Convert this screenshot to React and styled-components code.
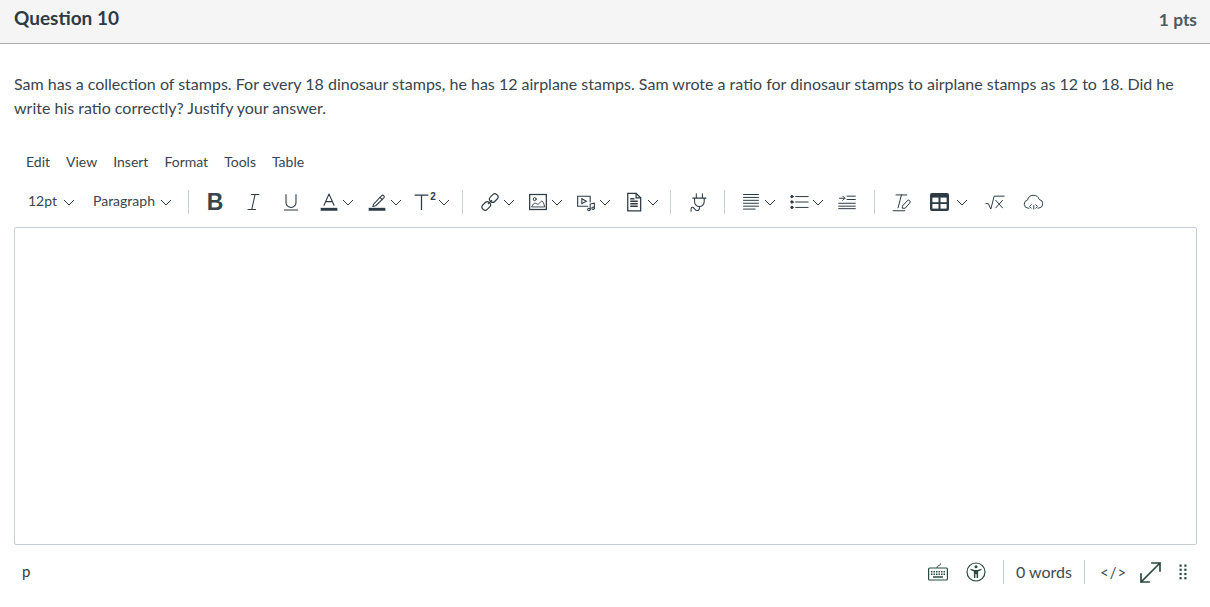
import React from 'react';
import styled, { createGlobalStyle } from 'styled-components';

const INK = '#2d3b45';
const GREEN = '#2b4a3e';

const GlobalStyle = createGlobalStyle`
    html, body {
        margin: 0;
        padding: 0;
        background: #fff;
        overflow: hidden;
    }
    body {
        font-family: Lato, "Liberation Sans", sans-serif;
        color: ${INK};
    }
`;

const Page = styled.div`
    width: 1210px;
    height: 607px;
`;

const QuestionHeader = styled.header`
    display: flex;
    align-items: center;
    justify-content: space-between;
    box-sizing: border-box;
    height: 44px;
    padding: 0 13px 7px 14px;
    background: #f5f5f5;
    border-bottom: 1px solid #a9adb0;
`;

const QuestionTitle = styled.h2`
    margin: 0;
    font-size: 19px;
    line-height: 24px;
    font-weight: 700;
`;

const Points = styled.span`
    font-size: 17.4px;
    line-height: 24px;
    font-weight: 700;
    color: #4d5a63;
    padding-top: 4px;
`;

const QuestionText = styled.p`
    margin: 28px 13px 0 14px;
    font-size: 16px;
    line-height: 24px;
    color: #38454e;
`;

const MenuBar = styled.nav`
    display: flex;
    align-items: center;
    height: 30px;
    margin-top: 27px;
    padding-left: 18px;
`;

const MenuItem = styled.span`
    padding: 0 8px;
    font-size: 14px;
    line-height: 20px;
    color: #38454e;
`;

const Toolbar = styled.div`
    display: flex;
    align-items: center;
    height: 38px;
    margin-top: 6px;
    padding-left: 14px;
`;

const SelectButton = styled.div`
    display: flex;
    align-items: center;
    gap: 5.5px;
    width: ${(p) => p.$width}px;
    padding-left: 14px;
    box-sizing: border-box;
    font-size: 14px;
    flex: none;
    color: #38454e;
`;

const SelectLabel = styled.span`
    padding-bottom: 4px;
`;

const Divider = styled.span`
    flex: none;
    width: 1px;
    height: ${(p) => p.$height || 24}px;
    margin: 0 ${(p) => p.$right ?? 8}px 0 ${(p) => p.$left ?? 8}px;
    background: #c7cdd1;
`;

const IconButton = styled.div`
    flex: none;
    display: flex;
    align-items: center;
    justify-content: center;
    width: 38px;
    height: 38px;
`;

const SplitButton = styled.div`
    flex: none;
    display: flex;
    align-items: center;
    height: 38px;
    width: ${(p) => p.$width || 48}px;
    padding-left: 3px;
    box-sizing: border-box;
`;

const SplitIcon = styled.span`
    flex: none;
    display: flex;
    align-items: center;
    justify-content: center;
    width: 32px;
`;

const SplitArrow = styled.span`
    flex: none;
    display: flex;
    justify-content: center;
    width: 12px;
    margin-left: ${(p) => p.$offset ?? -3}px;
`;

const BoldGlyph = styled.span`
    font-family: "Liberation Sans", sans-serif;
    font-weight: 700;
    font-size: 23px;
    line-height: 24px;
    color: #38454e;
`;

const Superscript = styled.span`
    display: flex;
    align-items: flex-start;
    height: 22px;

    sup {
        font-family: "Liberation Sans", sans-serif;
        font-size: 10px;
        line-height: 11px;
        font-weight: 700;
        vertical-align: baseline;
        margin-left: 1px;
    }
`;

const Editor = styled.div`
    box-sizing: border-box;
    height: 318px;
    margin: 6px 13px 0 14px;
    border: 1px solid #c7cdd1;
    border-radius: 2px;
`;

const StatusBar = styled.footer`
    display: flex;
    align-items: center;
    height: 40px;
    margin: 7px 13px 0 14px;
    font-size: 16px;
`;

const ElementPath = styled.span`
    padding: 0 0 2px 8px;
    font-size: 15px;
    flex: 1;
`;

const StatusIcon = styled.span`
    flex: none;
    display: flex;
    align-items: center;
    justify-content: center;
    width: ${(p) => p.$width}px;
    margin-left: ${(p) => p.$gap || 0}px;
`;

const WordCount = styled.span`
    flex: none;
    padding-bottom: 2px;
    font-size: 16px;
    color: #3d4a52;
`;

const SourceToggle = styled.span`
    flex: none;
    width: 24px;
    margin: 0 15px;
    font-size: 15px;
    letter-spacing: 1px;
    white-space: nowrap;
    color: #3d4a52;
`;

const Icon = ({ size = 20, w, h, box = '0 0 24 24', children, stroke = INK, sw = 1.3, join = 'round' }) => (
    <svg
        width={w || size}
        height={h || size}
        viewBox={box}
        fill="none"
        stroke={stroke}
        strokeWidth={sw}
        strokeLinecap="round"
        strokeLinejoin={join}
    >
        {children}
    </svg>
);

const Chevron = () => (
    <svg width="12" height="7" viewBox="0 0 12 7" fill="none" stroke={INK} strokeWidth="1">
        <path d="M1 1l5 5 5-5" />
    </svg>
);

const ItalicIcon = () => (
    <Icon size={20}>
        <path d="M10 3h9M6 21h9M14.5 3L10.5 21" />
    </Icon>
);

const UnderlineIcon = () => (
    <Icon size={20}>
        <path d="M6 3v9.5a6 6 0 0 0 12 0V3" />
        <path d="M4 21.5h16" />
    </Icon>
);

const TextColorIcon = () => (
    <Icon size={20}>
        <path d="M6 16L12 2.5 18 16M8 11.5h8" />
        <rect x="2" y="19" width="20" height="3.5" fill={INK} stroke="none" />
    </Icon>
);

const HighlightIcon = () => (
    <Icon size={20}>
        <path d="M8 14.5L17.5 4.5a1.8 1.8 0 0 1 2.7 2.5L10.5 16.5l-3.5 1z" />
        <path d="M15.5 6.5l2.8 2.6" />
        <rect x="2" y="19" width="20" height="3.5" fill={INK} stroke="none" />
    </Icon>
);

const SuperscriptBase = () => (
    <Icon w={15} h={19} box="0 0 14 18" sw={1.2}>
        <path d="M1 4h12M7 4v14" />
    </Icon>
);

const LinkIcon = () => (
    <Icon size={20} sw={1.4}>
        <rect x="11" y="3.5" width="11" height="7.5" rx="3.4" transform="rotate(-45 16.5 7.25)" />
        <rect x="2" y="13" width="11" height="7.5" rx="3.4" transform="rotate(-45 7.5 16.75)" />
        <path d="M10 14l4-4" />
    </Icon>
);

const ImageIcon = () => (
    <Icon size={20} sw={1.5} join="miter">
        <rect x="2" y="3" width="20" height="18" />
        <circle cx="8" cy="8.5" r="1.8" strokeWidth="1.2" />
        <path d="M4.5 17.5c1.5-3 3-4.5 4.5-4s2 1.5 3.5 1 2.5-3.5 4-3.5 2.5 2.5 3.5 6.5z" strokeWidth="1.1" />
    </Icon>
);

const MediaIcon = () => (
    <Icon size={20} join="miter">
        <path d="M14 17H2V5h15v7" />
        <path d="M7 8v6l5.5-3z" />
        <path d="M17 21v-6.5l5-1v6" />
        <circle cx="15.5" cy="21" r="1.5" />
        <circle cx="20.5" cy="19.5" r="1.5" />
    </Icon>
);

const DocumentIcon = () => (
    <Icon size={20} sw={1.5} join="miter">
        <path d="M4.5 1.5h10l5.5 5.5v15.5H4.5z" />
        <path d="M14.5 1.5V7H20" />
        <path d="M7.5 8h5M7.5 11h9M7.5 14h9M7.5 17h9" strokeWidth="1.8" strokeLinecap="butt" />
    </Icon>
);

const PlugIcon = () => (
    <Icon size={21} sw={1.2}>
        <path d="M9.5 2v5M16.5 2v5M5.5 7h15M7.5 7v4a5.5 5.5 0 0 0 11 0V7M13 16.5v2" />
        <path d="M13 18.5c0 2.5-2 3-3.5 2.5S7 18 5.5 17.5 3.5 18.5 3.5 20v2" />
    </Icon>
);

const AlignIcon = () => (
    <Icon size={20} sw={1.2}>
        <path d="M3 3h18M3 6.5h18M3 10h18M3 13.5h18M3 17h18M3 20.5h14" />
    </Icon>
);

const ListIcon = () => (
    <Icon size={20} sw={1.2}>
        <circle cx="3.5" cy="5.5" r="1.4" fill={INK} />
        <circle cx="3.5" cy="12" r="1.4" fill={INK} />
        <circle cx="3.5" cy="18.5" r="1.4" fill={INK} />
        <path d="M8 5.5h15M8 12h15M8 18.5h15" />
    </Icon>
);

const IndentIcon = () => (
    <Icon size={20} sw={1.2}>
        <path d="M12 5h10M12 9h10M2 13.5h20M2 17h20M2 20h20" />
        <path d="M3 7.5h6.5M7 5l2.5 2.5L7 10" />
    </Icon>
);

const ClearFormatIcon = () => (
    <Icon size={20} sw={1.2}>
        <path d="M6 3.5h13M12.5 3.5L8.5 19" />
        <path d="M2.5 22.5h14" />
        <path d="M14 16.5l5.5-6a2 2 0 0 1 3 2.7L17 19.5h-3z" />
    </Icon>
);

const TableIcon = () => (
    <svg width="19" height="18" viewBox="0 0 19 18">
        <rect width="19" height="18" rx="2" fill={INK} />
        <rect x="2.4" y="4.6" width="6.1" height="4.6" fill="#fff" />
        <rect x="10.5" y="4.6" width="6.1" height="4.6" fill="#fff" />
        <rect x="2.4" y="11" width="6.1" height="4.6" fill="#fff" />
        <rect x="10.5" y="11" width="6.1" height="4.6" fill="#fff" />
    </svg>
);

const SquareRootIcon = () => (
    <Icon size={20} sw={1.2}>
        <path d="M1 14h3l3 6.5L11 5h12" />
        <path d="M13 10l8 9M21 10l-8 9" />
    </Icon>
);

const CloudIcon = () => (
    <Icon size={21} sw={1.1}>
        <path d="M7 18.5H6a4.7 4.7 0 0 1-.8-9.3 6.9 6.9 0 0 1 13.3-.7 5 5 0 0 1-.5 9.9h-1" />
        <path d="M9.5 14.5L7.5 16.5l2 2M14.5 14.5l2 2-2 2M12.3 15.5v4" />
    </Icon>
);

const KeyboardIcon = () => (
    <svg width="20" height="18" viewBox="0 0 20 18" fill="none" stroke={GREEN}>
        <path d="M9 5c0-1.5.5-2 2-2.5S12.5 1.5 12.5 .5" strokeWidth="1" />
        <rect x=".6" y="5" width="18.8" height="12" rx="1" strokeWidth="1.2" />
        <path d="M3 8.8h14M3 11.2h14" strokeWidth="1.5" strokeDasharray="1.5 1" />
        <path d="M5 14h10" strokeWidth="1.5" />
    </svg>
);

const AccessibilityIcon = () => (
    <svg width="20" height="20" viewBox="0 0 20 20">
        <circle cx="10" cy="10" r="9" fill="none" stroke={GREEN} strokeWidth="1.2" />
        <circle cx="10" cy="4.8" r="1.5" fill={GREEN} />
        <path d="M4.5 6.8l4 1.2h3l4-1.2v1.2l-3.4 1.4V16h-1.5v-4h-1.2v4H7.9V9.4L4.5 8z" fill={GREEN} />
    </svg>
);

const ExpandIcon = () => (
    <Icon size={23} box="0 0 23 23" stroke={GREEN} sw={1.7} join="miter">
        <path d="M2 21L21 2M13 2h8v8M2 13v8h8" strokeLinecap="square" />
    </Icon>
);

const DragHandle = () => (
    <svg width="8" height="16" viewBox="0 0 8 16" fill={GREEN}>
        {[0, 1, 2, 3].map((row) => (
            <React.Fragment key={row}>
                <rect x="0.5" y={0.5 + row * 4.2} width="2.2" height="2.2" />
                <rect x="5.3" y={0.5 + row * 4.2} width="2.2" height="2.2" />
            </React.Fragment>
        ))}
    </svg>
);

const Split = ({ children, width, offset }) => (
    <SplitButton $width={width}>
        <SplitIcon>{children}</SplitIcon>
        <SplitArrow $offset={offset}><Chevron /></SplitArrow>
    </SplitButton>
);

const menus = ['Edit', 'View', 'Insert', 'Format', 'Tools', 'Table'];

const App = () => {
    return (
        <Page>
            <GlobalStyle />
            <QuestionHeader>
                <QuestionTitle>Question 10</QuestionTitle>
                <Points>1 pts</Points>
            </QuestionHeader>
            <QuestionText>
                Sam has a collection of stamps. For every 18 dinosaur stamps, he has 12 airplane stamps. Sam wrote a ratio for dinosaur stamps to airplane stamps as 12 to 18. Did he write his ratio correctly? Justify your answer.
            </QuestionText>
            <MenuBar>
                {menus.map((m) => <MenuItem key={m}>{m}</MenuItem>)}
            </MenuBar>
            <Toolbar>
                <SelectButton $width={65}><SelectLabel>12pt</SelectLabel> <Chevron /></SelectButton>
                <SelectButton $width={101}><SelectLabel>Paragraph</SelectLabel> <Chevron /></SelectButton>
                <Divider $right={7} />
                <IconButton><BoldGlyph>B</BoldGlyph></IconButton>
                <IconButton><ItalicIcon /></IconButton>
                <IconButton><UnderlineIcon /></IconButton>
                <Split><TextColorIcon /></Split>
                <Split><HighlightIcon /></Split>
                <Split><Superscript><SuperscriptBase /><sup>2</sup></Superscript></Split>
                <Divider />
                <Split><LinkIcon /></Split>
                <Split><ImageIcon /></Split>
                <Split><MediaIcon /></Split>
                <Split><DocumentIcon /></Split>
                <Divider $left={7} />
                <IconButton><PlugIcon /></IconButton>
                <Divider $left={7} $right={7} />
                <Split><AlignIcon /></Split>
                <Split><ListIcon /></Split>
                <IconButton><IndentIcon /></IconButton>
                <Divider $left={8} $right={7} />
                <IconButton><ClearFormatIcon /></IconButton>
                <Split width={56} offset={1}><TableIcon /></Split>
                <IconButton><SquareRootIcon /></IconButton>
                <IconButton><CloudIcon /></IconButton>
            </Toolbar>
            <Editor />
            <StatusBar>
                <ElementPath>p</ElementPath>
                <StatusIcon $width={38}><KeyboardIcon /></StatusIcon>
                <StatusIcon $width={38}><AccessibilityIcon /></StatusIcon>
                <Divider $left={8} $right={12} />
                <WordCount>0 words</WordCount>
                <Divider $left={12} $right={0} />
                <SourceToggle>&lt;/&gt;</SourceToggle>
                <StatusIcon $width={23}><ExpandIcon /></StatusIcon>
                <StatusIcon $width={28} $gap={7}><DragHandle /></StatusIcon>
            </StatusBar>
        </Page>
    );
};

export default App;
